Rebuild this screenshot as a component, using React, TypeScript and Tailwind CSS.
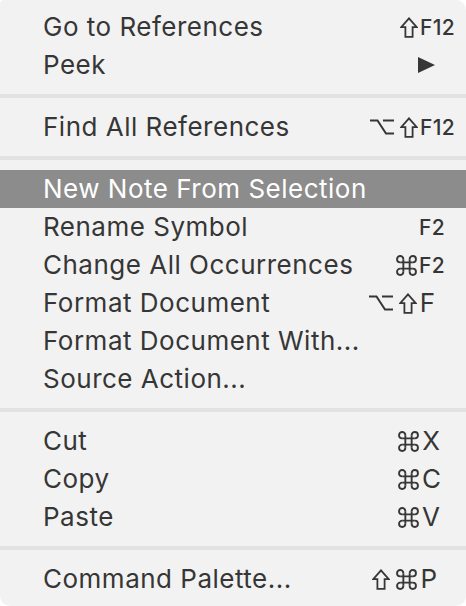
import React from "react";

type Part = "shift" | "opt" | "cmd" | "arrow" | { key: string; small?: boolean };

interface Item {
  label: string;
  keys?: Part[];
  mr?: string;
  active?: boolean;
}

const groups: Item[][] = [
  [
    { label: "Go to References", keys: ["shift", { key: "F12", small: true }], mr: "mr-[11px]" },
    { label: "Peek", keys: ["arrow"], mr: "mr-[31px]" },
  ],
  [
    {
      label: "Find All References",
      keys: ["opt", "shift", { key: "F12", small: true }],
      mr: "mr-[11px]",
    },
  ],
  [
    { label: "New Note From Selection", active: true },
    { label: "Rename Symbol", keys: [{ key: "F2", small: true }], mr: "mr-[21px]" },
    { label: "Change All Occurrences", keys: ["cmd", { key: "F2", small: true }], mr: "mr-[21px]" },
    { label: "Format Document", keys: ["opt", "shift", { key: "F" }], mr: "mr-[31px]" },
    { label: "Format Document With..." },
    { label: "Source Action..." },
  ],
  [
    { label: "Cut", keys: ["cmd", { key: "X" }], mr: "mr-[26px]" },
    { label: "Copy", keys: ["cmd", { key: "C" }], mr: "mr-[25px]" },
    { label: "Paste", keys: ["cmd", { key: "V" }], mr: "mr-[26px]" },
  ],
  [{ label: "Command Palette...", keys: ["shift", "cmd", { key: "P" }], mr: "mr-[29px]" }],
];

function ShiftIcon() {
  return (
    <svg width="18" height="21" viewBox="0 0 18 21" fill="none" stroke="currentColor" strokeWidth="1.8" strokeLinejoin="miter">
      <path d="M9 1.3 L16.8 10.2 L12.6 10.2 L12.6 19.8 L5.4 19.8 L5.4 10.2 L1.2 10.2 Z" />
    </svg>
  );
}

function OptIcon() {
  return (
    <svg width="24" height="16" viewBox="0 0 24 16" fill="none" stroke="currentColor" strokeWidth="2">
      <path d="M0 1.5 H7.5 L16 14.5 H24" />
      <path d="M13 1.5 H24" />
    </svg>
  );
}

function CmdIcon() {
  return (
    <svg width="21" height="21" viewBox="0 0 20 20" fill="none" stroke="currentColor" strokeWidth="1.8">
      <path d="M7 4 V16 M13 4 V16 M4 7 H16 M4 13 H16" />
      <path d="M7 4 A3 3 0 1 0 4 7" />
      <path d="M13 4 A3 3 0 1 1 16 7" />
      <path d="M4 13 A3 3 0 1 0 7 16" />
      <path d="M16 13 A3 3 0 1 1 13 16" />
    </svg>
  );
}

function ArrowIcon() {
  return (
    <svg width="17" height="16" viewBox="0 0 17 16" fill="currentColor">
      <path d="M0 0 L17 8 L0 16 Z" />
    </svg>
  );
}

function Keys({ keys }: { keys: Part[] }) {
  return (
    <span className="flex items-center">
      {keys.map((p, i) => {
        const gap = i > 0 ? (typeof p === "object" ? "ml-[2px]" : "ml-[6px]") : "";
        if (p === "shift") return <span key={i} className={gap}><ShiftIcon /></span>;
        if (p === "opt") return <span key={i} className={gap}><OptIcon /></span>;
        if (p === "cmd") return <span key={i} className={gap}><CmdIcon /></span>;
        if (p === "arrow") return <span key={i} className={gap}><ArrowIcon /></span>;
        return (
          <span
            key={i}
            className={`${gap} ${p.small ? "text-[21px] font-medium tracking-[0.3px]" : "text-[26px] ml-[3px]"} leading-none`}
          >
            {p.key}
          </span>
        );
      })}
    </span>
  );
}

export default function App() {
  return (
    <div className="h-[606px] w-[466px] bg-white">
      <div
        className="flex h-full flex-col rounded-[10px] rounded-tl-[4px] bg-[#f2f2f2] py-[8px] text-[#363636]"
        style={{ fontFamily: "Inter, 'Noto Sans', sans-serif" }}
      >
        {groups.map((group, gi) => (
          <React.Fragment key={gi}>
            {gi > 0 && (
              <div className="flex h-[24px] items-center">
                <div className="h-[4px] w-full bg-[#e2e2e2]" />
              </div>
            )}
            {group.map((item) => (
              <div
                key={item.label}
                className={`flex h-[38px] items-center justify-between pl-[43px] ${
                  item.active ? "bg-[#8c8c8c] text-white" : ""
                }`}
              >
                <span className="text-[26px] leading-none tracking-[0.5px]">{item.label}</span>
                {item.keys && (
                  <span className={item.mr}>
                    <Keys keys={item.keys} />
                  </span>
                )}
              </div>
            ))}
          </React.Fragment>
        ))}
      </div>
    </div>
  );
}
